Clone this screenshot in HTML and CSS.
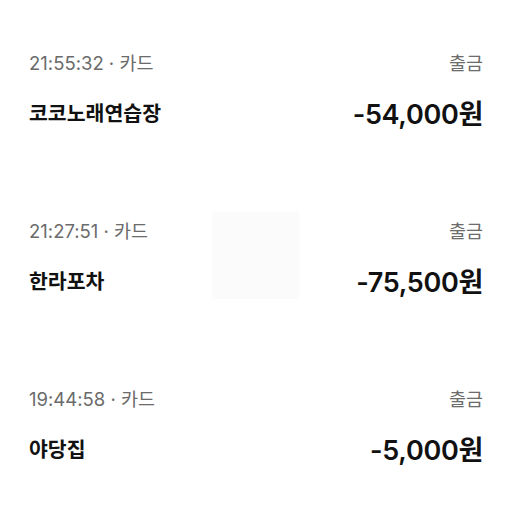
FILE: index.html
```html
<!DOCTYPE html>
<html lang="ko">
<head>
    <meta charset="UTF-8">
    <meta name="viewport" content="width=device-width, initial-scale=1.0">
    <title>거래내역</title>
    <link rel="stylesheet" href="styles.css">
</head>
<body>
    <ul class="tx-list">
        <li class="tx-item">
            <div class="tx-meta">
                <span>21:55:32 · 카드</span>
                <span>출금</span>
            </div>
            <div class="tx-main">
                <span class="tx-name">코코노래연습장</span>
                <span class="tx-amount">-54,000원</span>
            </div>
        </li>
        <li class="tx-item">
            <div class="tx-meta">
                <span>21:27:51 · 카드</span>
                <span>출금</span>
            </div>
            <div class="tx-main">
                <span class="tx-name">한라포차</span>
                <span class="tx-amount">-75,500원</span>
            </div>
            <div class="tx-blank"></div>
        </li>
        <li class="tx-item">
            <div class="tx-meta">
                <span>19:44:58 · 카드</span>
                <span>출금</span>
            </div>
            <div class="tx-main">
                <span class="tx-name">야당집</span>
                <span class="tx-amount">-5,000원</span>
            </div>
        </li>
    </ul>
</body>
</html>
```

FILE: styles.css
```css
body {
    margin: 0;
    background-color: #fff;
    font-family: Inter, "Noto Sans CJK KR", sans-serif;
    color: #111;
}
.tx-list {
    list-style-type: none;
    margin: 0;
    padding: 51px 0 0;
}
.tx-item {
    position: relative;
    height: 168px;
    padding: 0 29px;
    box-sizing: border-box;
}
.tx-item:last-child {
    height: auto;
}
.tx-meta {
    display: flex;
    justify-content: space-between;
    height: 24px;
    line-height: 24px;
    font-size: 18.5px;
    color: #6b6b6b;
}
.tx-main {
    display: flex;
    justify-content: space-between;
    align-items: center;
    margin-top: 19px;
    height: 36px;
}
.tx-name {
    font-size: 20.5px;
    font-weight: 700;
}
.tx-amount {
    font-size: 27px;
    font-weight: 600;
    letter-spacing: -0.3px;
}
/* faint placeholder square over the second row */
.tx-blank {
    position: absolute;
    left: 212px;
    top: -7px;
    width: 87px;
    height: 87px;
    background-color: #fbfbfb;
}
```
